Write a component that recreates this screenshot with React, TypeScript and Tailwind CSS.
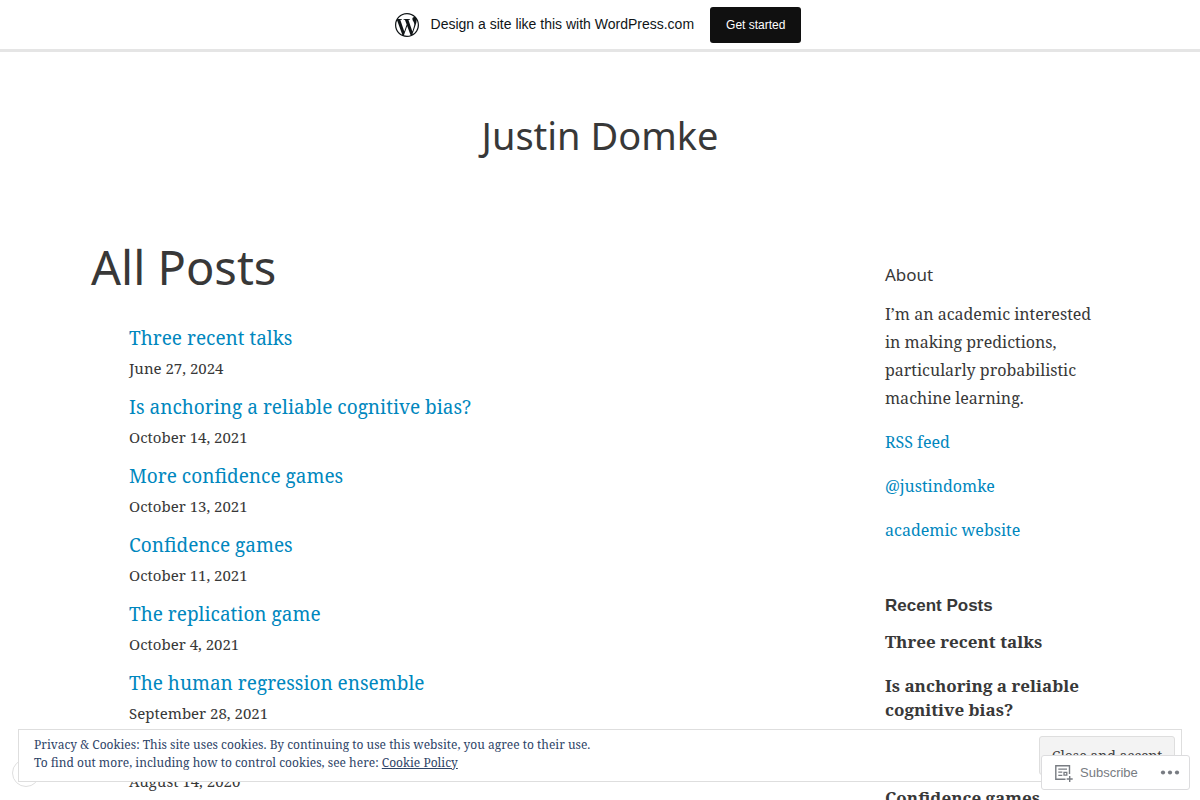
import React from "react";
import { SiWordpress } from "react-icons/si";

const POSTS = [
  { title: "Three recent talks", date: "June 27, 2024" },
  { title: "Is anchoring a reliable cognitive bias?", date: "October 14, 2021" },
  { title: "More confidence games", date: "October 13, 2021" },
  { title: "Confidence games", date: "October 11, 2021" },
  { title: "The replication game", date: "October 4, 2021" },
  { title: "The human regression ensemble", date: "September 28, 2021" },
];

const LINKS = ["RSS feed", "@justindomke", "academic website"];

function MarketingBar() {
  return (
    <div className="sticky top-0 z-10 flex h-[52px] items-center justify-center border-b-[3px] border-[#e5e5e5] bg-white font-['Liberation_Sans',sans-serif]">
      <SiWordpress className="mr-3 size-6 text-[#101517]" aria-hidden="true" />
      <span className="mr-4 pb-0.5 text-sm text-[#101517]">Design a site like this with WordPress.com</span>
      <button type="button" className="mr-1 h-9 rounded-[3px] bg-[#101010] px-4 text-xs text-white">
        Get started
      </button>
    </div>
  );
}

function PostList() {
  return (
    <ul className="mt-6 pl-[38px]">
      {POSTS.map((p) => (
        <li key={p.date} className="h-[69px]">
          <a href="#" className="block text-[19px] leading-[34px] text-[#0087be]">
            {p.title}
          </a>
          <div className="text-[15px] leading-[27px]">{p.date}</div>
        </li>
      ))}
      {/* untitled entry, only its date shows */}
      <li className="pt-[33px] text-[15px] leading-[27px]">August 14, 2020</li>
    </ul>
  );
}

function Sidebar() {
  return (
    <aside className="w-[224px] shrink-0 pt-[26px]">
      <h2 className="font-['Noto_Sans',sans-serif] text-[17px] leading-6">About</h2>
      <p className="mt-[13px] text-base leading-7">
        I’m an academic interested in making predictions, particularly probabilistic machine learning.
      </p>
      {LINKS.map((l) => (
        <p key={l} className="mt-4 text-base leading-7">
          <a href="#" className="text-[#0087be]">
            {l}
          </a>
        </p>
      ))}
      <h2 className="mt-[50px] font-['Liberation_Sans',sans-serif] text-[17px] leading-6 font-bold">Recent Posts</h2>
      <ul className="mt-3 flex flex-col gap-5">
        {POSTS.slice(0, 4).map((p) => (
          <li key={p.title} className="text-[17px] leading-6 font-bold">
            <a href="#">{p.title}</a>
          </li>
        ))}
      </ul>
    </aside>
  );
}

function CookieBanner() {
  return (
    <div className="fixed right-[18px] bottom-[18px] left-[18px] z-20 flex h-[53px] items-start justify-between border border-[#dedede] bg-white pt-[6px] pr-[6px] pl-[15px]">
      <p className="text-xs leading-[18px] text-[#2e4467]">
        Privacy &amp; Cookies: This site uses cookies. By continuing to use this website, you agree to their use.
        <br />
        To find out more, including how to control cookies, see here:{" "}
        <a href="#" className="underline">
          Cookie Policy
        </a>
      </p>
      <button
        type="button"
        className="h-[39px] w-[136px] shrink-0 rounded-[3px] border border-[#dedede] bg-[#f3f3f3] text-sm text-[#404040]"
      >
        Close and accept
      </button>
    </div>
  );
}

function SubscribeBar() {
  return (
    <div className="fixed right-[10px] bottom-[10px] z-30 flex h-[35px] w-[149px] items-center justify-between rounded-[3px] border border-[#dcdcde] bg-white pr-[9px] pl-[13px] font-['Liberation_Sans',sans-serif] text-[#787c82]">
      <button type="button" className="flex items-center gap-[7px] text-[13px]">
        <svg width="18" height="18" viewBox="0 0 18 18" fill="none" stroke="currentColor" aria-hidden="true">
          <path d="M14.5 10V1.7H.8v13.6h9.7" strokeWidth="1.4" />
          <path d="M3.3 5.2H12M3.3 8.2h4M3.3 11.4h4" strokeWidth="1.3" />
          <path d="M9 8.3h2.8v2.8H9z" strokeWidth="1.3" />
          <path d="M14.7 12v6M11.7 15h6" strokeWidth="1.4" />
        </svg>
        Subscribe
      </button>
      <button type="button" aria-label="More options">
        <svg width="20" height="6" viewBox="0 0 20 6" fill="currentColor" aria-hidden="true">
          <circle cx="3" cy="2.5" r="2.1" />
          <circle cx="10" cy="2.5" r="2.1" />
          <circle cx="17" cy="2.5" r="2.1" />
        </svg>
      </button>
    </div>
  );
}

export default function App() {
  return (
    <div className="h-screen overflow-hidden bg-white font-['Noto_Serif','Liberation_Serif',serif] text-[#383838]">
      <MarketingBar />
      <header className="pt-14 text-center">
        <h1 className="font-['Noto_Sans',sans-serif] text-[38px] leading-[54px]">Justin Domke</h1>
      </header>
      <div className="mx-auto mt-[75px] flex max-w-[1018px] justify-between">
        <main>
          <h2 className="font-['Noto_Sans',sans-serif] text-[47px] leading-[60px]">All Posts</h2>
          <PostList />
        </main>
        <Sidebar />
      </div>
      <div className="fixed bottom-[13px] left-3 size-7 rounded-full border border-[#dedede] bg-white" />
      <CookieBanner />
      <SubscribeBar />
    </div>
  );
}
